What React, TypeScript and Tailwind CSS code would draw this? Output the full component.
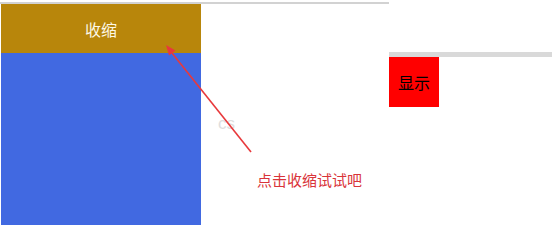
import React from "react";

export default function App() {
  return (
    <div
      className="relative w-[552px] h-[227px] bg-white overflow-hidden flex"
      style={{ fontFamily: '"Noto Sans CJK SC", "Liberation Sans", sans-serif' }}
    >
      <div className="w-[389px] pt-[2px] flex flex-col">
        <div className="h-[2px] bg-[#d2d2d2]" />
        <div className="ml-px w-[200px] flex flex-col">
          <div className="h-[49px] bg-[#b8860b] flex items-center justify-center text-[16px] leading-none text-[#fdf8e6]">
            收缩
          </div>
          <div className="h-[172px] bg-[#4169e1]" />
        </div>
      </div>
      <div className="flex-1 pt-[52px] flex flex-col">
        <div className="h-[5px] bg-[#d9d9d9]" />
        <div className="w-[50px] h-[50px] bg-[#ff0000] flex items-center justify-center text-[16px] leading-none text-black">
          显示
        </div>
      </div>

      <div
        className="absolute left-[218px] top-[115px] text-[17px] leading-none text-[#dedede]"
        style={{ fontFamily: '"Liberation Sans", sans-serif' }}
      >
        cs
      </div>

      <svg className="absolute left-0 top-0" width="552" height="227" viewBox="0 0 552 227">
        <line x1="251" y1="152" x2="172" y2="53" stroke="#e8393c" strokeWidth="1.6" />
        <polygon points="166,45 175.5,50.5 169,55.5" fill="#e8393c" />
      </svg>

      <div className="absolute left-[257px] top-[172px] text-[15px] leading-none text-[#d9343a] whitespace-nowrap">
        点击收缩试试吧
      </div>
    </div>
  );
}
